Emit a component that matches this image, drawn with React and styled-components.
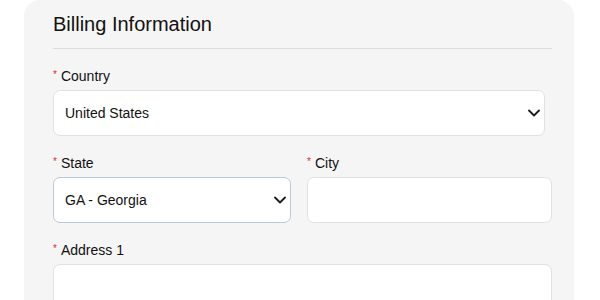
import React from 'react'
import styled, { createGlobalStyle } from 'styled-components'

const GlobalStyle = createGlobalStyle`
    body {
        margin: 0;
        background: #ffffff;
        font-family: "Liberation Sans", Arial, sans-serif;
        color: #111;
    }
`

const Chevron = () => (
    <ChevronIcon width="12" height="8" viewBox="0 0 12 8" fill="none">
        <path d="M1 1.5 L6 6.5 L11 1.5" stroke="#1a1a1a" strokeWidth="1.8" strokeLinecap="round" strokeLinejoin="round" />
    </ChevronIcon>
)

const Field = ({ label, children }) => (
    <FieldWrap>
        <Label><Star>*</Star>{label}</Label>
        {children}
    </FieldWrap>
)

const SelectBox = ({ value, focused, options }) => (
    <SelectWrap>
        <Select defaultValue={value} $focused={focused}>
            {options.map(o => <option key={o}>{o}</option>)}
        </Select>
        <Chevron />
    </SelectWrap>
)

const App = () => {
    return (
        <>
            <GlobalStyle />
            <Page>
                <Panel>
                    <Heading>Billing Information</Heading>
                    <Form>
                        <Field label="Country">
                            <CountryBox>
                                <SelectBox value="United States" options={['United States', 'Canada']} />
                            </CountryBox>
                        </Field>
                        <Row>
                            <Field label="State">
                                <SelectBox value="GA - Georgia" focused options={['GA - Georgia', 'FL - Florida']} />
                            </Field>
                            <Field label="City">
                                <Input />
                            </Field>
                        </Row>
                        <Field label="Address 1">
                            <Input />
                        </Field>
                    </Form>
                </Panel>
            </Page>
        </>
    )
}

export default App

const Page = styled.div`
    padding: 0 26px 0 24px;
    height: 300px;
    overflow: hidden;
`

const Panel = styled.div`
    background: #f5f5f5;
    border-radius: 16px 16px 0 0;
    padding: 0 22px 40px 29px;
    min-height: 400px;
`

const Heading = styled.h2`
    margin: 0;
    padding: 12px 0 12px;
    font-size: 20px;
    line-height: 24px;
    font-weight: 400;
    color: #111;
    border-bottom: 1px solid #dcdcdc;
`

const Form = styled.div`
    display: flex;
    flex-direction: column;
    gap: 17px;
    padding-top: 17px;
`

const Row = styled.div`
    display: grid;
    grid-template-columns: 238px 1fr;
    gap: 16px;
`

const FieldWrap = styled.div`
    display: flex;
    flex-direction: column;
    gap: 4px;
`

const Label = styled.label`
    display: block;
    height: 20px;
    font-size: 14px;
    line-height: 20px;
    color: #111;
`

const Star = styled.span`
    position: relative;
    top: -3px;
    color: #d9302c;
    font-size: 10px;
    line-height: 1;
    margin-right: 4px;
`

const CountryBox = styled.div`
    width: 492px;
`

const SelectWrap = styled.div`
    position: relative;
`

const Select = styled.select`
    display: block;
    appearance: none;
    width: 100%;
    height: 46px;
    box-sizing: border-box;
    background: #fff;
    border: 1px solid ${props => props.$focused ? '#b9c9dd' : '#e1e1e1'};
    border-radius: 7px;
    padding: 0 30px 0 11px;
    font-family: "Liberation Sans", Arial, sans-serif;
    font-size: 14px;
    color: #111;
    outline: none;
`

const ChevronIcon = styled.svg`
    position: absolute;
    right: 5px;
    top: 50%;
    transform: translateY(-50%);
    pointer-events: none;
`

const Input = styled.input`
    display: block;
    height: 46px;
    box-sizing: border-box;
    width: 100%;
    background: #fff;
    border: 1px solid #e1e1e1;
    border-radius: 7px;
    padding: 0 11px;
    font-family: "Liberation Sans", Arial, sans-serif;
    font-size: 14px;
    outline: none;
`
